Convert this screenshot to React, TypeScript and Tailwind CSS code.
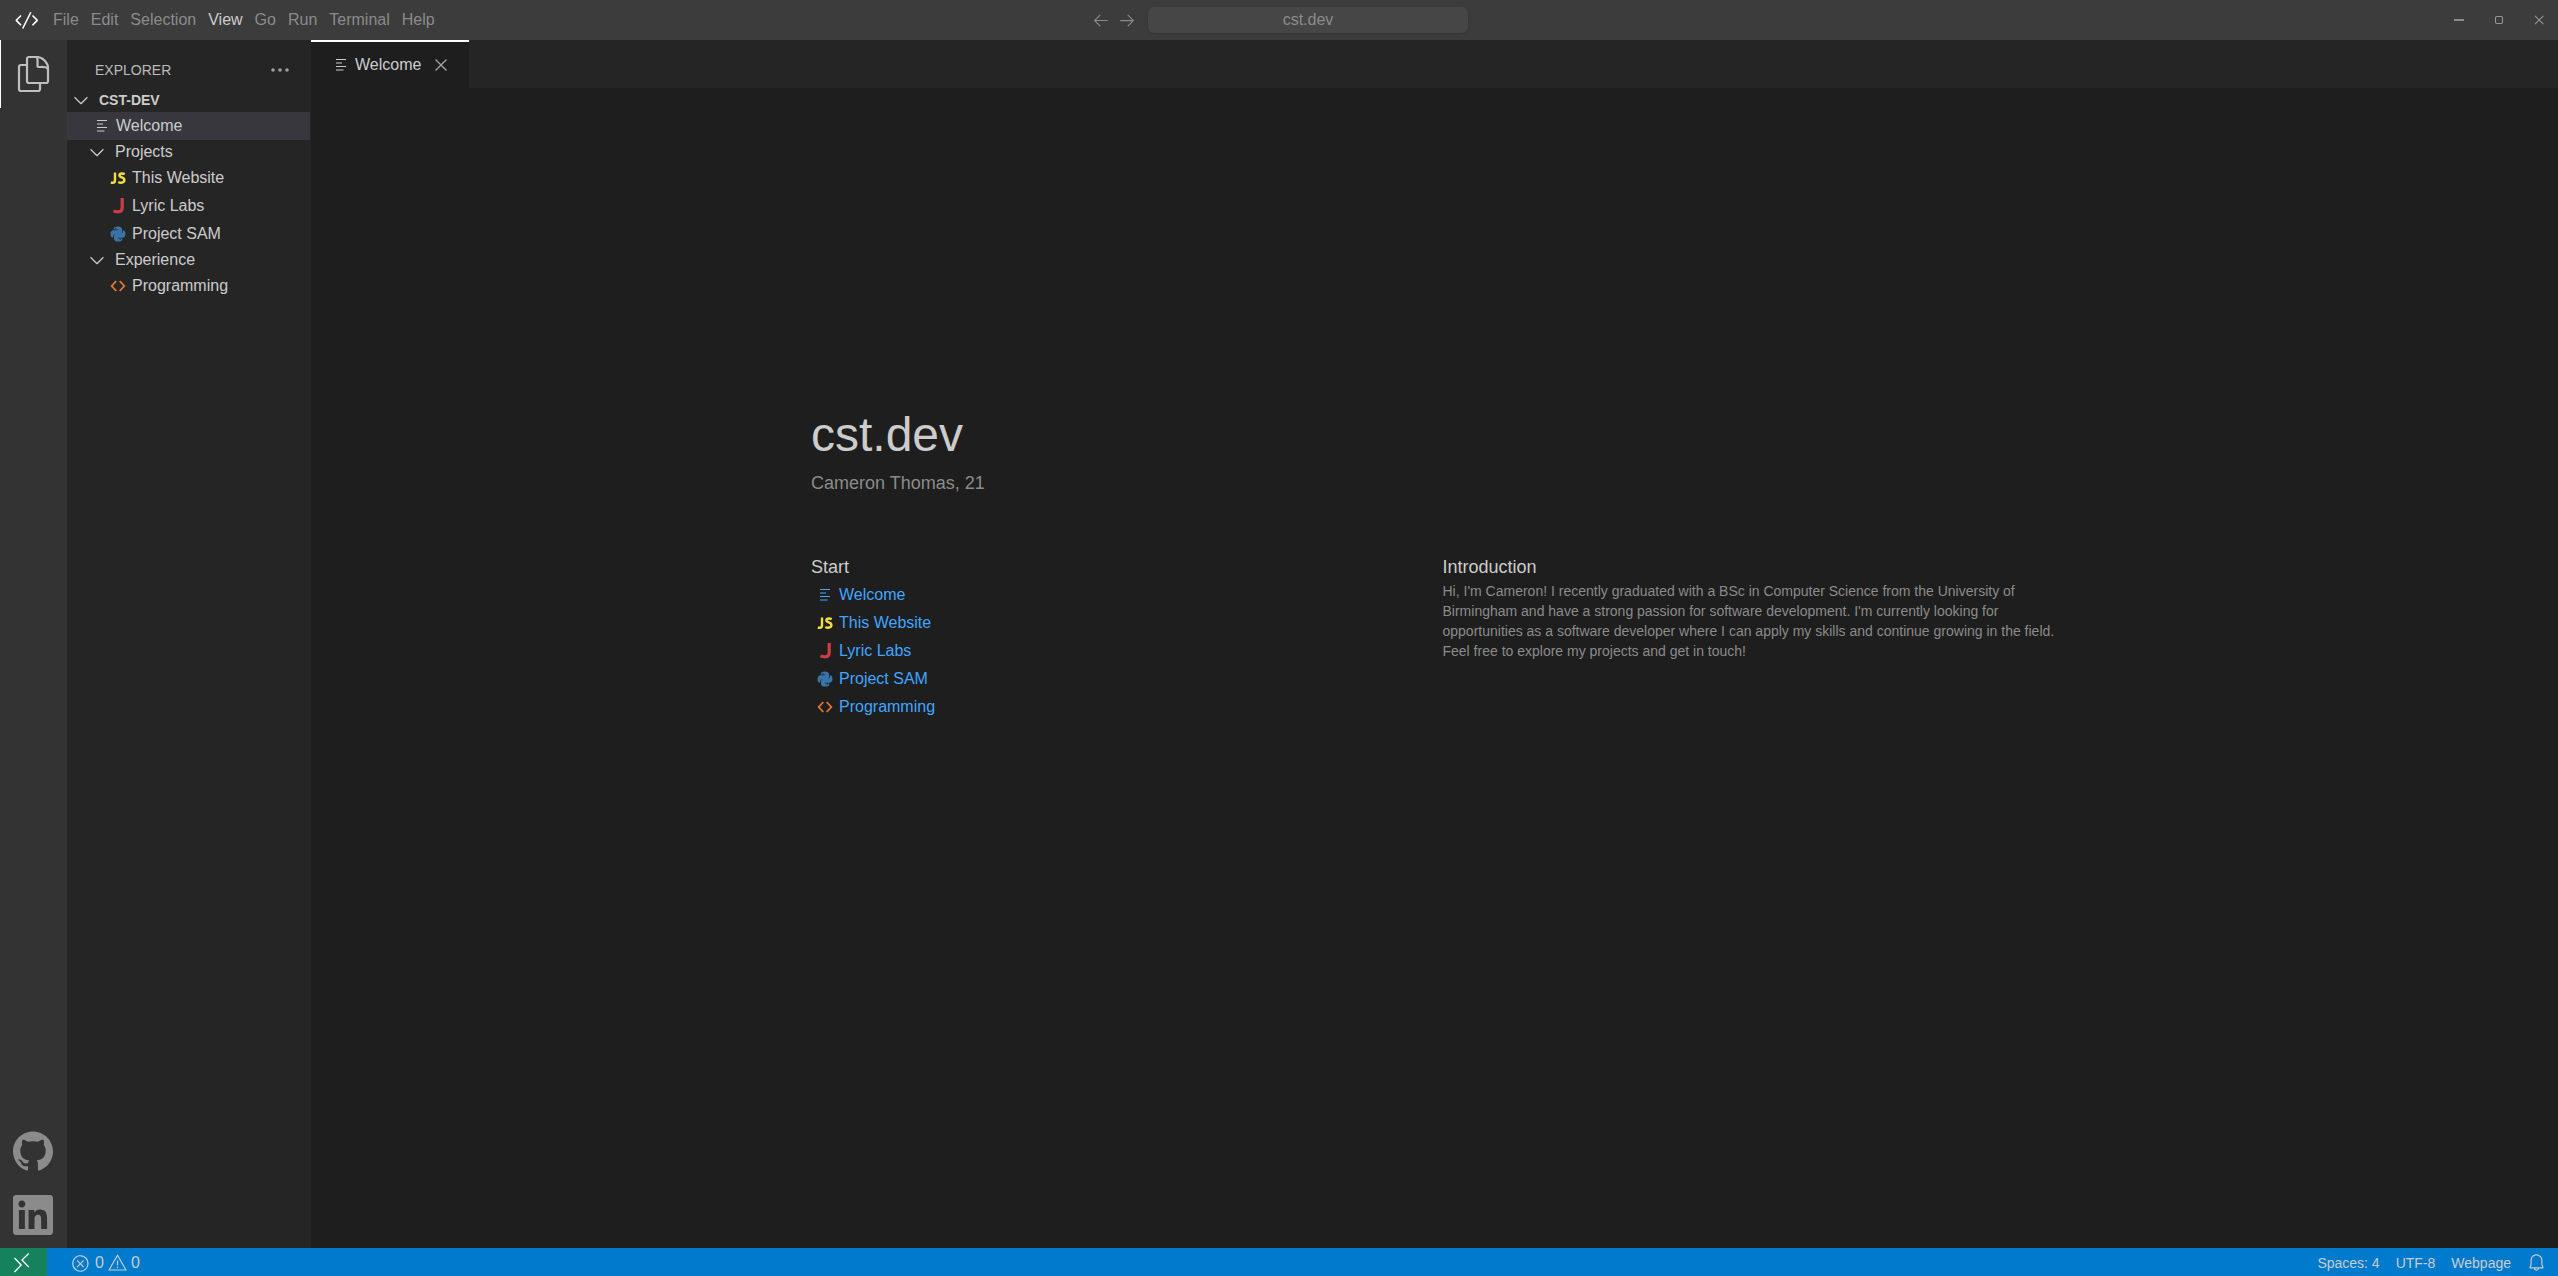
import type { ReactNode } from "react";
import {
  VscArrowLeft,
  VscArrowRight,
  VscBell,
  VscChevronDown,
  VscClose,
  VscCode,
  VscError,
} from "react-icons/vsc";

type FileKind = "text" | "js" | "java" | "python" | "html";

function FileIcon({ kind }: { kind: FileKind }) {
  return (
    <span className="flex h-7 w-7 shrink-0 items-center justify-center">
      {kind === "text" && (
        <svg width="28" height="28" viewBox="0 0 28 28" fill="none" stroke="currentColor" strokeWidth="1.2">
          <path d="M9 8.500h10M9 12h6M9 15.500h10M9 19h7.500" />
        </svg>
      )}
      {kind === "js" && (
        <svg width="28" height="28" viewBox="0 0 28 28" fill="none" stroke="#f1dd3f" strokeWidth="2.400">
          <path d="M11 8.500v7.500q0 2.700-2.200 2.700-1 0-1.900-.4" />
          <path d="M20.700 10.100q-1.300-.6-2.700-.6-2.600 0-2.600 1.700 0 1.300 2.500 2.200 2.500 1 2.500 2.700 0 2.600-3.200 2.600-1.600 0-2.900-.7" />
        </svg>
      )}
      {kind === "java" && (
        <svg width="28" height="28" viewBox="0 0 28 28" fill="none" stroke="#cc3e44" strokeWidth="3.200">
          <path d="M18.200 6v9.700q0 4.100-4.400 4.100-2.200 0-4.300-.9" />
        </svg>
      )}
      {kind === "python" && (
        <svg width="28" height="28" viewBox="0 0 28 28" fill="#3874a8">
          <path d="M13.800 6.400c2.600 0 4.200.9 4.200 2.600v3.200c0 1.200-.8 1.900-2 1.900h-4.200c-1.700 0-2.600 1-2.600 2.500v1.200c-1.900 0-2.700-1.500-2.700-3.800s1.200-3.700 3.100-3.700h4.600v-.7H9.700V9c0-1.800 1.500-2.600 4.100-2.600z" />
          <path d="M14.200 21.600c-2.600 0-4.200-.9-4.200-2.600v-3.200c0-1.200.8-1.900 2-1.900h4.200c1.700 0 2.600-1 2.600-2.500v-1.200c1.900 0 2.700 1.500 2.700 3.800s-1.200 3.700-3.100 3.700h-4.600v.7h4.500V19c0 1.800-1.500 2.600-4.100 2.600z" />
          <circle cx="11.800" cy="8.500" r=".6" fill="#252526" />
          <circle cx="16.200" cy="19.500" r=".6" fill="#252526" />
        </svg>
      )}
      {kind === "html" && (
        <svg width="28" height="28" viewBox="0 0 28 28" fill="none" stroke="#e37933" strokeWidth="1.800">
          <path d="M12.300 9l-4.600 5 4.600 5M15.700 9l4.600 5-4.600 5" />
        </svg>
      )}
    </span>
  );
}

const files: { kind: FileKind; name: string }[] = [
  { kind: "text", name: "Welcome" },
  { kind: "js", name: "This Website" },
  { kind: "java", name: "Lyric Labs" },
  { kind: "python", name: "Project SAM" },
  { kind: "html", name: "Programming" },
];

function WindowControls() {
  return (
    <div className="-mr-px flex items-center justify-end">
      {["M15 20h10", "M18 16.500h4a1.500 1.500 0 0 1 1.500 1.500v4a1.500 1.500 0 0 1-1.500 1.500h-4a1.500 1.500 0 0 1-1.500-1.500v-4a1.500 1.500 0 0 1 1.500-1.500z", "M16 15.800l8.400 8.400M24.400 15.800l-8.400 8.400"].map(
        (d, i) => (
          <svg key={d} width="40" height="40" viewBox="0 0 40 40" fill="none" stroke="#959595" strokeWidth={i === 0 ? 1.8 : 1.1}>
            <path d={d} />
          </svg>
        ),
      )}
    </div>
  );
}

function TitleBar() {
  const menus = ["File", "Edit", "Selection", "View", "Go", "Run", "Terminal", "Help"];
  return (
    <header className="grid h-10 shrink-0 grid-cols-[1fr_auto_1fr] items-center overflow-hidden bg-[#3c3c3c] text-[#8b8b8b]">
      <div className="flex items-center">
        <VscCode className="ml-[14px] mr-[13px] text-[26px] text-white" />
        <nav className="flex gap-3">
          {menus.map((m) => (
            <span key={m} className={m === "View" ? "text-[#cccccc]" : ""}>
              {m}
            </span>
          ))}
        </nav>
      </div>
      <div className="ml-0.5 flex items-center">
        <VscArrowLeft className="mr-2 text-lg" />
        <VscArrowRight className="mr-3 text-lg" />
        <div className="flex h-[26px] w-80 items-center justify-center rounded-md bg-[#464646] shadow-sm">
          cst.dev
        </div>
      </div>
      <WindowControls />
    </header>
  );
}

function ActivityBar() {
  return (
    <aside className="flex w-[67px] shrink-0 flex-col justify-between bg-[#333333]">
      <div className="flex h-[68px] items-center border-l border-white pl-4 text-[#bfbfbf]">
        <svg width="33" height="38" viewBox="0 0 33 38" fill="none" stroke="currentColor" strokeWidth="2.200">
          <path d="M12 2h8c5.500 0 11 5.500 11 11v13a2 2 0 0 1-2 2H12a2 2 0 0 1-2-2V4a2 2 0 0 1 2-2z" />
          <path d="M19.500 2c1.500 1.500 1 5 1 8.500a1.500 1.500 0 0 0 1.500 1.500c4 0 7.500-.5 9 2" />
          <path d="M10 10H4a2 2 0 0 0-2 2v22a2 2 0 0 0 2 2h17a2 2 0 0 0 2-2v-6" />
        </svg>
      </div>
      <div className="flex flex-col items-center gap-6 pb-[13px] pr-px text-[#8b8b8b]">
        <svg width="40" height="40" viewBox="0 0 24 24" fill="currentColor">
          <path d="M12 .297c-6.630 0-12 5.373-12 12 0 5.303 3.438 9.800 8.205 11.385.600.113.820-.258.820-.577 0-.285-.010-1.040-.015-2.040-3.338.724-4.042-1.610-4.042-1.610C4.422 18.070 3.633 17.700 3.633 17.700c-1.087-.744.084-.729.084-.729 1.205.084 1.838 1.236 1.838 1.236 1.070 1.835 2.809 1.305 3.495.998.108-.776.417-1.305.760-1.605-2.665-.300-5.466-1.332-5.466-5.930 0-1.310.465-2.380 1.235-3.220-.135-.303-.540-1.523.105-3.176 0 0 1.005-.322 3.300 1.230.960-.267 1.980-.399 3-.405 1.020.006 2.040.138 3 .405 2.280-1.552 3.285-1.230 3.285-1.230.645 1.653.240 2.873.120 3.176.765.840 1.230 1.910 1.230 3.220 0 4.610-2.805 5.625-5.475 5.920.420.360.810 1.096.810 2.220 0 1.606-.015 2.896-.015 3.286 0 .315.210.690.825.570C20.565 22.092 24 17.592 24 12.297c0-6.627-5.373-12-12-12" />
        </svg>
        <svg width="40" height="40" viewBox="0 0 24 24" fill="currentColor">
          <path d="M20.447 20.452h-3.554v-5.569c0-1.328-.027-3.037-1.852-3.037-1.853 0-2.136 1.445-2.136 2.939v5.667H9.351V9h3.414v1.561h.046c.477-.900 1.637-1.850 3.370-1.850 3.601 0 4.267 2.370 4.267 5.455v6.286zM5.337 7.433c-1.144 0-2.063-.926-2.063-2.065 0-1.138.920-2.063 2.063-2.063 1.140 0 2.064.925 2.064 2.063 0 1.139-.925 2.065-2.064 2.065zm1.782 13.019H3.555V9h3.564v11.452zM22.225 0H1.771C.792 0 0 .774 0 1.729v20.542C0 23.227.792 24 1.771 24h20.451C23.200 24 24 23.227 24 22.271V1.729C24 .774 23.200 0 22.222 0h.003z" />
        </svg>
      </div>
    </aside>
  );
}

function FileRow({ index, className }: { index: number; className: string }) {
  const file = files[index];
  return (
    <div className={`flex h-7 items-center ${className}`}>
      <FileIcon kind={file.kind} />
      <span>{file.name}</span>
    </div>
  );
}

function Folder({ name, children }: { name: string; children: ReactNode }) {
  return (
    <div>
      <div className="flex h-6 items-center pl-[19px]">
        <VscChevronDown className="mr-[7px] text-[22px]" />
        {name}
      </div>
      {children}
    </div>
  );
}

function Sidebar() {
  return (
    <aside className="w-[244px] shrink-0 bg-[#252526] pr-px text-[#cccccc]">
      <div className="flex h-12 items-center justify-between pl-7 pr-[21px] pt-3 text-sm text-[#bbbbbb]">
        EXPLORER
        <svg width="18" height="4" viewBox="0 0 18 4" fill="#a0a0a0">
          <circle cx="2" cy="2" r="1.800" />
          <circle cx="9" cy="2" r="1.800" />
          <circle cx="16" cy="2" r="1.800" />
        </svg>
      </div>
      <div className="flex h-6 items-center pl-[3px] text-sm font-bold">
        <VscChevronDown className="mr-[7px] text-[22px]" />
        CST-DEV
      </div>
      <FileRow index={0} className="bg-[#37373d] pl-[21px]" />
      <Folder name="Projects">
        <FileRow index={1} className="pl-[37px]" />
        <FileRow index={2} className="pl-[37px]" />
        <FileRow index={3} className="pl-[37px]" />
      </Folder>
      <Folder name="Experience">
        <FileRow index={4} className="pl-[37px]" />
      </Folder>
    </aside>
  );
}

function Editor() {
  return (
    <main className="flex min-w-0 flex-1 flex-col bg-[#1e1e1e]">
      <div className="flex h-12 shrink-0 bg-[#252526]">
        <div className="flex w-[158px] items-center border-t-2 border-white bg-[#1e1e1e] pl-4 text-[#cccccc]">
          <FileIcon kind="text" />
          <span>Welcome</span>
          <VscClose className="ml-[9px] text-[22px] text-[#a0a0a0]" />
        </div>
      </div>
      <div className="mx-auto w-[1247px] pt-[323px] text-[#8b8b8b]">
        <h1 className="text-5xl leading-[48px] text-[#cccccc]">cst.dev</h1>
        <p className="mt-[10px] text-lg">Cameron Thomas, 21</p>
        <div className="mt-14 grid grid-cols-2 gap-4">
          <section>
            <h2 className="text-lg text-[#cccccc]">Start</h2>
            {files.map((f, i) => (
              <FileRow key={f.name} index={i} className="text-[#40a6ff]" />
            ))}
          </section>
          <section>
            <h2 className="text-lg text-[#cccccc]">Introduction</h2>
            <p className="text-sm">
              Hi, I'm Cameron! I recently graduated with a BSc in Computer Science from the University of
              Birmingham and have a strong passion for software development. I'm currently looking for
              opportunities as a software developer where I can apply my skills and continue growing in the field.
              Feel free to explore my projects and get in touch!
            </p>
          </section>
        </div>
      </div>
    </main>
  );
}

function StatusBar() {
  return (
    <footer className="flex h-7 shrink-0 items-center justify-between bg-[#007acc] text-[#cccccc]">
      <div className="flex h-full items-center">
        <div className="flex h-full w-[47px] items-center bg-[#16825d] pl-3">
          <svg width="20" height="28" viewBox="0 0 20 28" fill="none" stroke="#ffffff" strokeWidth="1.300">
            <path d="M2.500 10l6.700 7-6.700 7M16.700 5.500l-6.700 6.500 6.700 7" />
          </svg>
        </div>
        <VscError className="ml-6 mr-[5px] mt-0.5 text-[19px]" />
        <span className="pt-0.5">0</span>
        <svg className="ml-1 mr-[4px] mt-0.5" width="19" height="18" viewBox="0 0 19 18" fill="none" stroke="currentColor" strokeWidth="1.200">
          <path d="M9.500 1.200L1 16h17L9.500 1.200z" strokeLinejoin="round" />
          <path d="M9.500 6.500v5M9.500 12.800v1.500" />
        </svg>
        <span className="pt-0.5">0</span>
      </div>
      <div className="flex items-center gap-4 pr-3 pt-px text-sm">
        <span>Spaces: 4</span>
        <span>UTF-8</span>
        <span>Webpage</span>
        <VscBell className="text-[19px]" />
      </div>
    </footer>
  );
}

export default function App() {
  return (
    <div className="flex h-screen flex-col overflow-hidden font-['Liberation_Sans',Arial,sans-serif] text-base">
      <TitleBar />
      <div className="flex min-h-0 flex-1">
        <ActivityBar />
        <Sidebar />
        <Editor />
      </div>
      <StatusBar />
    </div>
  );
}
